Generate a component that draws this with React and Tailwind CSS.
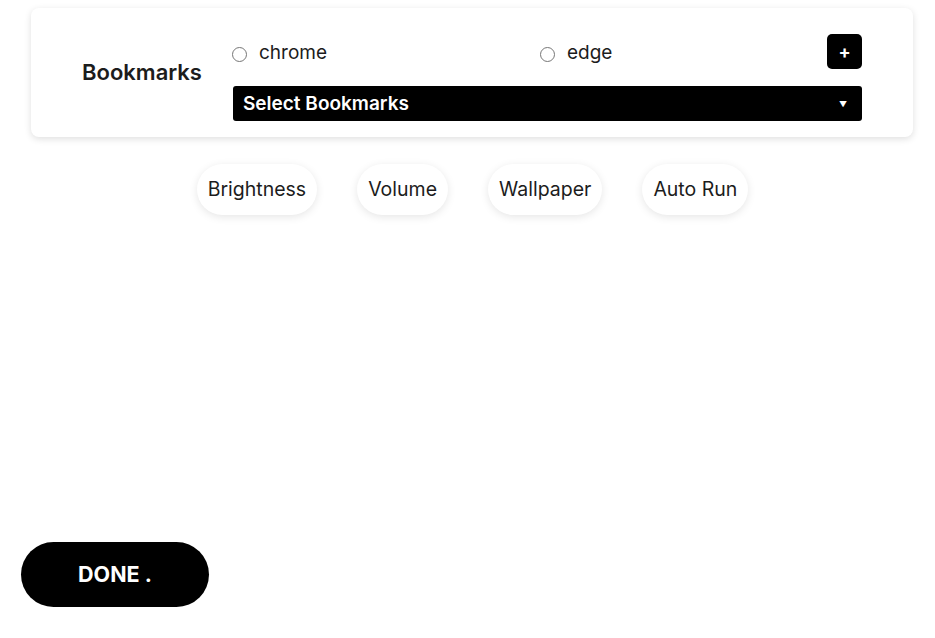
const tools = ["Brightness", "Volume", "Wallpaper", "Auto Run"]

function Radio({ label, className = "" }) {
  return (
    <label className={`flex items-center gap-[12px] mt-[3px] text-[19px] text-[#1c1c1c] ${className}`}>
      <span className="w-[15px] h-[15px] rounded-full border border-[#767676] bg-white mt-[3px]" />
      <span>{label}</span>
    </label>
  )
}

export default function App() {
  return (
    <div className="h-screen bg-white flex flex-col justify-between font-['Inter',sans-serif] text-[#1c1c1c]">
      <div>
        {/* Bookmarks card */}
        <div className="ml-[31px] w-[882px] mt-[8px] bg-white rounded-[8px] shadow-[0_2px_7px_rgba(0,0,0,0.13)] pl-[51px] pr-[51px] pt-[26px] pb-[16px] flex">
          <div className="w-[151px] shrink-0 pt-[22px] text-[22px] font-semibold">Bookmarks</div>
          <div className="flex-1 flex flex-col gap-[17px]">
            <div className="flex items-center h-[35px]">
              <Radio label="chrome" className="w-[308px] -ml-px" />
              <Radio label="edge" />
              <button className="ml-auto w-[35px] h-[35px] rounded-[5px] bg-black text-white text-[18px] font-bold flex items-center justify-center">
                +
              </button>
            </div>
            <div className="h-[35px] bg-black rounded-[3px] flex items-center justify-between pl-[10px] pr-[15px] text-white">
              <span className="text-[19px] font-semibold mt-[1px]">Select Bookmarks</span>
              <span className="text-[8px]">▼</span>
            </div>
          </div>
        </div>

        {/* Tools */}
        <div className="flex justify-center gap-[40px] mt-[27px] ml-[10px]">
          {tools.map((t) => (
            <button
              key={t}
              className="h-[51px] px-[11px] rounded-full bg-white shadow-[0_2px_8px_rgba(0,0,0,0.1)] text-[19.5px] text-[#1c1c1c]"
            >
              {t}
            </button>
          ))}
        </div>
      </div>

      <div className="pl-[21px] pb-[31px]">
        <button className="w-[188px] h-[65px] rounded-full bg-black text-white text-[21.5px] font-bold">
          DONE .
        </button>
      </div>
    </div>
  )
}
